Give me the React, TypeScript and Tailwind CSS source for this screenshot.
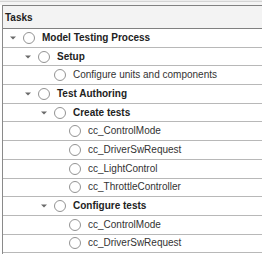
import React from 'react';

// ─── Types ────────────────────────────────────────────────────────────────────

interface TaskRow {
  label: string;
  level: number;
  parent?: boolean;
}

const rows: TaskRow[] = [
  { label: 'Model Testing Process', level: 0, parent: true },
  { label: 'Setup', level: 1, parent: true },
  { label: 'Configure units and components', level: 2 },
  { label: 'Test Authoring', level: 1, parent: true },
  { label: 'Create tests', level: 2, parent: true },
  { label: 'cc_ControlMode', level: 3 },
  { label: 'cc_DriverSwRequest', level: 3 },
  { label: 'cc_LightControl', level: 3 },
  { label: 'cc_ThrottleController', level: 3 },
  { label: 'Configure tests', level: 2, parent: true },
  { label: 'cc_ControlMode', level: 3 },
  { label: 'cc_DriverSwRequest', level: 3 },
];

const indent = ['pl-[5px]', 'pl-[20px]', 'pl-[36px]', 'pl-[51px]'];

// ─── Row ──────────────────────────────────────────────────────────────────────

function Row({ row }: { row: TaskRow }) {
  return (
    <div className={`h-[18.7px] border-b border-[#b8b8b8] flex items-center ${indent[row.level]}`}>
      <div className="w-[10px] flex justify-center">
        {row.parent && (
          <svg width="6" height="4" viewBox="0 0 6 4">
            <path d="M0 0.5 L6 0.5 L3 3.5 Z" fill="#6a6a6a" />
          </svg>
        )}
      </div>
      <div className="ml-[5px] w-[12px] h-[12px] rounded-full border border-[#939393] bg-white shrink-0" />
      <span
        className={`ml-[7px] text-[10px] leading-none whitespace-nowrap ${row.parent ? 'font-bold text-[#222222]' : 'text-[#333333]'}`}
      >
        {row.label}
      </span>
    </div>
  );
}

// ─── Main ─────────────────────────────────────────────────────────────────────

export default function App() {
  return (
    <div className="w-[262px] h-[254px] overflow-hidden bg-white font-['Liberation_Sans',Arial,sans-serif]">
      {/* window top edge */}
      <div className="h-[1px] bg-[#ececec]" />
      <div className="h-[1px] bg-[#d4d4d4]" />
      <div className="h-[3px] bg-[#f4f4f4]" />

      <div className="ml-[2px] border-l border-[#8a8a8a] h-full">
        {/* Header */}
        <div className="h-[24px] border-t border-b border-[#808080] bg-[#f3f3f3] flex items-center pl-[2px]">
          <span className="text-[10px] font-bold text-[#222222]">Tasks</span>
        </div>

        {rows.map((row, i) => (
          <Row key={i} row={row} />
        ))}
      </div>
    </div>
  );
}
